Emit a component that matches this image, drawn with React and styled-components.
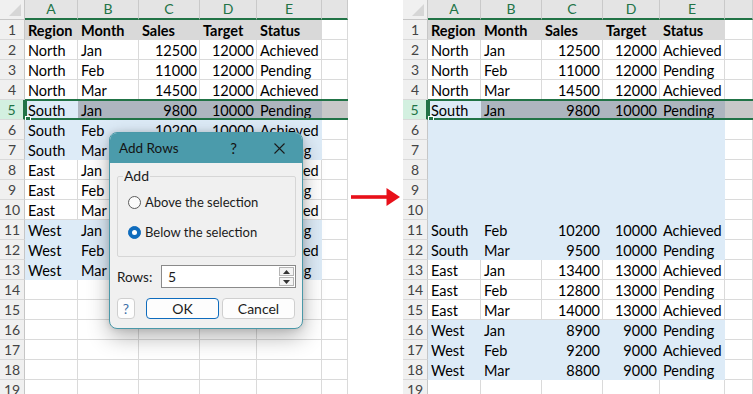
import React from "react";
import styled, { createGlobalStyle } from "styled-components";

const GREEN = "#217346";
const BLUE = "#ddebf7";
const GRAY = "#d9d9d9";
const SEL = "#adb5bf";
const SEL_EMPTY = "#c8c8c8";
const GRID = "#dadada";
const CELL_FONT = `Lato, "Noto Sans", sans-serif`;

const Global = createGlobalStyle`
  html, body { margin: 0; padding: 0; background: #fff; }
  body { width: 753px; height: 394px; overflow: hidden; font-family: ${CELL_FONT}; }
  * { box-sizing: border-box; }
`;

const Page = styled.div`
  display: flex;
  width: 753px;
  height: 394px;
  overflow: hidden;
  background: #fff;
`;

const SheetWrap = styled.div`
  position: relative;
  flex: 0 0 ${(p) => p.$w}px;
  height: 394px;
`;

const Sheet = styled.div`
  display: flex;
  flex-direction: column;
  width: 100%;
`;

const Row = styled.div`
  position: relative;
  display: grid;
  grid-template-columns: 25px 53px 61px 61px 57px 65px 1fr;
  height: 20px;
  flex: none;
`;

const Corner = styled.div`
  height: 20px;
  background: #f0f0f0;
  border-right: 1px solid #c6c6c6;
  border-bottom: 1px solid #c6c6c6;
  display: flex;
  align-items: flex-end;
  justify-content: flex-end;
  padding: 0 3px 3px 0;
`;

const ColHead = styled.div`
  height: 20px;
  background: #e4e4e4;
  border-right: 1px solid #c9c9c9;
  border-bottom: 2px solid ${GREEN};
  color: ${GREEN};
  font: 400 14px/18px ${CELL_FONT};
  text-align: center;
`;

const RowHead = styled.div`
  height: 20px;
  background: ${(p) => (p.$sel ? "#d3f0e0" : "#f0f0f0")};
  color: ${(p) => (p.$sel ? GREEN : "#444")};
  border-right: ${(p) => (p.$sel ? `2px solid ${GREEN}` : "1px solid #c6c6c6")};
  border-bottom: 1px solid #d9d9d9;
  font: 400 14px/20px ${CELL_FONT};
  text-align: center;
`;

const Cell = styled.div`
  height: 20px;
  background: ${(p) => p.$fill || "#fff"};
  border-right: 1px solid ${(p) => p.$fill || GRID};
  border-bottom: 1px solid ${(p) => p.$fill || GRID};
  padding: 1px 2px 0 3px;
  font: ${(p) => (p.$bold ? 700 : 400)} 14.5px/19px ${CELL_FONT};
  color: #000;
  text-align: ${(p) => (p.$num ? "right" : "left")};
  white-space: nowrap;
  overflow: hidden;
`;

const SelFrame = styled.div`
  position: absolute;
  left: 25px;
  right: 0;
  top: -1px;
  bottom: 0;
  border: 2px solid ${GREEN};
  border-right: none;
  pointer-events: none;
`;

const FillHandle = styled.div`
  position: absolute;
  left: -2px;
  bottom: -3px;
  width: 6px;
  height: 5px;
  background: ${GREEN};
  border: 1px solid #fff;
`;

const ArrowCol = styled.div`
  flex: 0 0 55px;
  display: flex;
  align-items: center;
  padding-left: 3px;
`;

/* ---------- dialog ---------- */

const Dialog = styled.div`
  position: absolute;
  left: 109px;
  top: 132px;
  width: 194px;
  height: 197px;
  border: 1px solid #4a98a8;
  border-radius: 8px;
  background: #f0f0f0;
  overflow: hidden;
  box-shadow: 0 8px 22px rgba(0, 0, 0, 0.3), 0 0 6px rgba(0, 0, 0, 0.12);
  display: flex;
  flex-direction: column;
  font: 400 13px/16px ${CELL_FONT};
  color: #1b1b1b;
`;

const TitleBar = styled.div`
  height: 30px;
  flex: none;
  background: #4b9bab;
  display: flex;
  align-items: center;
  padding: 0 17px 0 9px;
`;

const Title = styled.div`
  flex: 1;
  font-size: 13.5px;
  color: #141414;
`;

const TitleHelp = styled.div`
  font-size: 15px;
  color: #141414;
  margin-right: 37px;
`;

const Body = styled.div`
  flex: 1;
  display: flex;
  flex-direction: column;
  padding: 5px 6px 0 7px;
`;

const Group = styled.fieldset`
  margin: 0;
  height: 89px;
  padding: 0;
  border: 1px solid #d6d6d6;
  border-radius: 2px;
  min-width: 0;
`;

const Legend = styled.legend`
  margin-left: 5px;
  padding: 0 1px;
  font-size: 14px;
  line-height: 16px;
`;

const RadioList = styled.div`
  display: flex;
  flex-direction: column;
  gap: 10px;
  padding: 8px 0 0 10px;
`;

const RadioRow = styled.label`
  display: flex;
  align-items: center;
  height: 20px;
  gap: 4px;
`;

const Radio = styled.span`
  width: 13px;
  height: 13px;
  border-radius: 50%;
  border: 1px solid ${(p) => (p.$on ? "#0f6cbd" : "#5c5c5c")};
  background: ${(p) => (p.$on ? "#0f6cbd" : "#fbfbfb")};
  display: flex;
  align-items: center;
  justify-content: center;
  flex: none;
  &::after {
    content: "";
    display: ${(p) => (p.$on ? "block" : "none")};
    width: 5px;
    height: 5px;
    border-radius: 50%;
    background: #fff;
  }
`;

const RowsLine = styled.div`
  display: flex;
  align-items: center;
  margin-top: 8px;
  height: 23px;
`;

const RowsLabel = styled.span`
  width: 44px;
  flex: none;
  font-size: 13.5px;
`;

const NumBox = styled.div`
  flex: 1;
  height: 23px;
  background: #fff;
  border: 1px solid #8a8a8a;
  display: flex;
  align-items: center;
  padding: 0 1px 0 6px;
`;

const NumValue = styled.span`
  flex: 1;
  font-size: 14px;
`;

const Spin = styled.div`
  display: flex;
  flex-direction: column;
  gap: 1px;
  width: 15px;
`;

const SpinBtn = styled.div`
  height: 9px;
  border: 1px solid #b5b5b5;
  background: #f4f4f4;
  display: flex;
  align-items: center;
  justify-content: center;
`;

const Buttons = styled.div`
  display: flex;
  margin-top: 10px;
  height: 21px;
`;

const Btn = styled.div`
  width: ${(p) => p.$w}px;
  margin-left: ${(p) => p.$ml || 0}px;
  height: 21px;
  border: 1px solid ${(p) => (p.$primary ? "#0f6cbd" : "#cfcfcf")};
  border-radius: 4px;
  background: #fdfdfd;
  display: flex;
  align-items: center;
  justify-content: center;
  font-size: 14px;
  color: ${(p) => (p.$help ? "#3c6fa8" : "#1b1b1b")};
`;

/* ---------- data ---------- */

const HEAD = ["Region", "Month", "Sales", "Target", "Status"];
const D = {
  n1: ["North", "Jan", 12500, 12000, "Achieved"],
  n2: ["North", "Feb", 11000, 12000, "Pending"],
  n3: ["North", "Mar", 14500, 12000, "Achieved"],
  s1: ["South", "Jan", 9800, 10000, "Pending"],
  s2: ["South", "Feb", 10200, 10000, "Achieved"],
  s3: ["South", "Mar", 9500, 10000, "Pending"],
  e1: ["East", "Jan", 13400, 13000, "Achieved"],
  e2: ["East", "Feb", 12800, 13000, "Pending"],
  e3: ["East", "Mar", 14000, 13000, "Achieved"],
  w1: ["West", "Jan", 8900, 9000, "Pending"],
  w2: ["West", "Feb", 9200, 9000, "Achieved"],
  w3: ["West", "Mar", 8800, 9000, "Pending"],
};

const H = { v: HEAD, fill: GRAY, bold: true };
const W = (v) => ({ v, fill: null });
const B = (v) => ({ v, fill: BLUE });
const S = { v: D.s1, sel: true };
const E = { v: null, fill: null };

const LEFT = [H, W(D.n1), W(D.n2), W(D.n3), S, B(D.s2), B(D.s3), W(D.e1), W(D.e2), W(D.e3), B(D.w1), B(D.w2), B(D.w3), E, E, E, E, E, E];
const RIGHT = [H, W(D.n1), W(D.n2), W(D.n3), S, B(null), B(null), B(null), B(null), B(null), B(D.s2), B(D.s3), W(D.e1), W(D.e2), W(D.e3), B(D.w1), B(D.w2), B(D.w3), E];

function SheetGrid({ rows }) {
  return (
    <Sheet>
      <Row>
        <Corner>
          <svg width="12" height="12" viewBox="0 0 12 12">
            <polygon points="12,0 12,12 0,12" fill="#d6d6d6" />
          </svg>
        </Corner>
        {["A", "B", "C", "D", "E", ""].map((c, i) => (
          <ColHead key={i}>{c}</ColHead>
        ))}
      </Row>
      {rows.map((r, i) => (
        <Row key={i}>
          <RowHead $sel={r.sel}>{i + 1}</RowHead>
          {[0, 1, 2, 3, 4].map((c) => {
            let fill = r.fill;
            if (r.sel) fill = c === 0 ? BLUE : SEL;
            const val = r.v ? r.v[c] : "";
            return (
              <Cell key={c} $fill={fill} $bold={r.bold} $num={!r.bold && (c === 2 || c === 3)}>
                {val}
              </Cell>
            );
          })}
          <Cell $fill={r.sel ? SEL_EMPTY : null} />
          {r.sel && (
            <SelFrame>
              <FillHandle />
            </SelFrame>
          )}
        </Row>
      ))}
    </Sheet>
  );
}

function Tri({ down }) {
  return (
    <svg width="7" height="4" viewBox="0 0 7 4">
      <polygon points={down ? "0,0 7,0 3.5,4" : "0,4 7,4 3.5,0"} fill="#333" />
    </svg>
  );
}

function AddRowsDialog() {
  return (
    <Dialog>
      <TitleBar>
        <Title>Add Rows</Title>
        <TitleHelp>?</TitleHelp>
        <svg width="11" height="11" viewBox="0 0 11 11">
          <path d="M0.5 0.5 L10.5 10.5 M10.5 0.5 L0.5 10.5" stroke="#1a1a1a" strokeWidth="1.1" />
        </svg>
      </TitleBar>
      <Body>
        <Group>
          <Legend>Add</Legend>
          <RadioList>
            <RadioRow>
              <Radio />
              Above the selection
            </RadioRow>
            <RadioRow>
              <Radio $on />
              Below the selection
            </RadioRow>
          </RadioList>
        </Group>
        <RowsLine>
          <RowsLabel>Rows:</RowsLabel>
          <NumBox>
            <NumValue>5</NumValue>
            <Spin>
              <SpinBtn><Tri /></SpinBtn>
              <SpinBtn><Tri down /></SpinBtn>
            </Spin>
          </NumBox>
        </RowsLine>
        <Buttons>
          <Btn $w={18} $help>?</Btn>
          <Btn $w={73} $ml={11} $primary>OK</Btn>
          <Btn $w={73} $ml={3}>Cancel</Btn>
        </Buttons>
      </Body>
    </Dialog>
  );
}

export default function App() {
  return (
    <>
      <Global />
      <Page>
        <SheetWrap $w={348}>
          <SheetGrid rows={LEFT} />
          <AddRowsDialog />
        </SheetWrap>
        <ArrowCol>
          <svg width="49" height="20" viewBox="0 0 49 20">
            <rect x="0" y="8.2" width="37" height="3.6" fill="#e8101a" />
            <polygon points="35.5,1 49,10 35.5,19" fill="#e8101a" />
          </svg>
        </ArrowCol>
        <SheetWrap $w={350}>
          <SheetGrid rows={RIGHT} />
        </SheetWrap>
      </Page>
    </>
  );
}
